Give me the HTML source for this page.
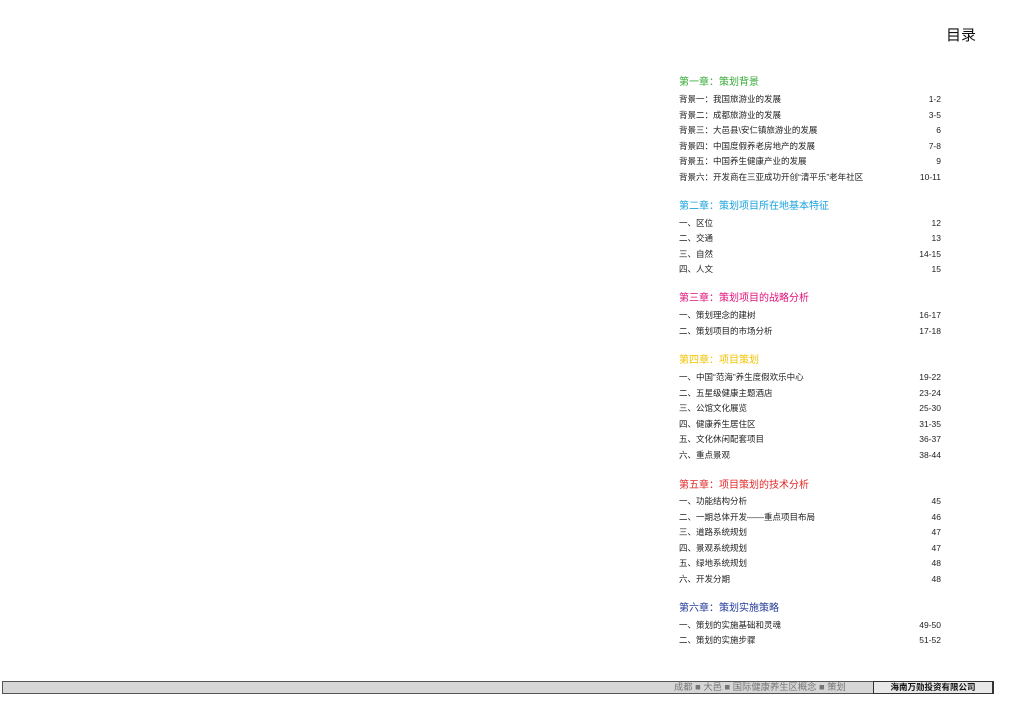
<!DOCTYPE html>
<html><head><meta charset="utf-8"><style>
body{margin:0;width:1024px;height:724px;background:#fff;position:relative;overflow:hidden;font-family:"Liberation Sans","Noto Sans CJK SC",sans-serif;}
.r{position:absolute;left:679px;width:262px;display:flex;justify-content:space-between;font-size:8.5px;line-height:10px;color:#222;white-space:nowrap}
.c{position:absolute;left:679px;font-size:10px;line-height:12px;white-space:nowrap}
</style></head><body>
<div style="position:absolute;left:946px;top:27px;font-size:15px;line-height:18px;color:#111">目录</div>

<div class="c" style="top:77px;color:#33aa33">第一章：策划背景</div>
<div class="r" style="top:94px"><span>背景一：我国旅游业的发展</span><span>1-2</span></div>
<div class="r" style="top:109.5px"><span>背景二：成都旅游业的发展</span><span>3-5</span></div>
<div class="r" style="top:125px"><span>背景三：大邑县\安仁镇旅游业的发展</span><span>6</span></div>
<div class="r" style="top:140.5px"><span>背景四：中国度假养老房地产的发展</span><span>7-8</span></div>
<div class="r" style="top:156px"><span>背景五：中国养生健康产业的发展</span><span>9</span></div>
<div class="r" style="top:171.5px"><span>背景六：开发商在三亚成功开创“清平乐”老年社区</span><span>10-11</span></div>

<div class="c" style="top:201px;color:#1aa3dd">第二章：策划项目所在地基本特征</div>
<div class="r" style="top:217.5px"><span>一、区位</span><span>12</span></div>
<div class="r" style="top:233px"><span>二、交通</span><span>13</span></div>
<div class="r" style="top:248.5px"><span>三、自然</span><span>14-15</span></div>
<div class="r" style="top:264px"><span>四、人文</span><span>15</span></div>

<div class="c" style="top:293px;color:#e0107a">第三章：策划项目的战略分析</div>
<div class="r" style="top:310px"><span>一、策划理念的建树</span><span>16-17</span></div>
<div class="r" style="top:325.5px"><span>二、策划项目的市场分析</span><span>17-18</span></div>

<div class="c" style="top:355px;color:#f2c200">第四章：项目策划</div>
<div class="r" style="top:372px"><span>一、中国“范海”养生度假欢乐中心</span><span>19-22</span></div>
<div class="r" style="top:387.5px"><span>二、五星级健康主题酒店</span><span>23-24</span></div>
<div class="r" style="top:403px"><span>三、公馆文化展览</span><span>25-30</span></div>
<div class="r" style="top:418.5px"><span>四、健康养生居住区</span><span>31-35</span></div>
<div class="r" style="top:434px"><span>五、文化休闲配套项目</span><span>36-37</span></div>
<div class="r" style="top:449.5px"><span>六、重点景观</span><span>38-44</span></div>

<div class="c" style="top:480px;color:#e02a2a">第五章：项目策划的技术分析</div>
<div class="r" style="top:496px"><span>一、功能结构分析</span><span>45</span></div>
<div class="r" style="top:511.5px"><span>二、一期总体开发——重点项目布局</span><span>46</span></div>
<div class="r" style="top:527px"><span>三、道路系统规划</span><span>47</span></div>
<div class="r" style="top:542.5px"><span>四、景观系统规划</span><span>47</span></div>
<div class="r" style="top:558px"><span>五、绿地系统规划</span><span>48</span></div>
<div class="r" style="top:573.5px"><span>六、开发分期</span><span>48</span></div>

<div class="c" style="top:603px;color:#223a99">第六章：策划实施策略</div>
<div class="r" style="top:619.5px"><span>一、策划的实施基础和灵魂</span><span>49-50</span></div>
<div class="r" style="top:635px"><span>二、策划的实施步骤</span><span>51-52</span></div>

<div style="position:absolute;left:2px;top:681px;width:870px;height:11px;background:#d6d6d6;border:1px solid #555;border-right:none"></div>
<div style="position:absolute;left:674px;top:681px;font-size:9.3px;line-height:12px;color:#777;white-space:nowrap">成都 ■ 大邑 ■ 国际健康养生区概念 ■ 策划</div>
<div style="position:absolute;left:873px;top:681px;width:118px;height:11px;background:#e8e8e8;border:1px solid #333;border-right:2px solid #333;font-size:8.5px;line-height:11px;text-align:center;color:#111;font-weight:bold">海南万勋投资有限公司</div>
</body></html>
